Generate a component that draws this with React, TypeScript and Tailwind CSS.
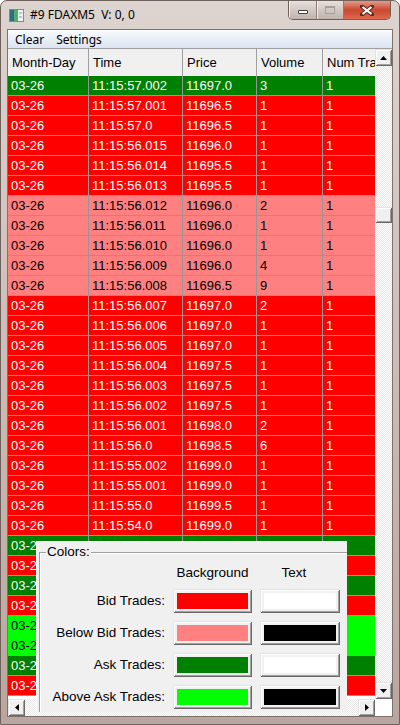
import { Fragment } from "react";

type Kind = "bid" | "below" | "ask" | "above";

const trades: [string, string, string, string, Kind][] = [
  ["11:15:57.002", "11697.0", "3", "1", "ask"],
  ["11:15:57.001", "11696.5", "1", "1", "bid"],
  ["11:15:57.0", "11696.5", "1", "1", "bid"],
  ["11:15:56.015", "11696.0", "1", "1", "bid"],
  ["11:15:56.014", "11695.5", "1", "1", "bid"],
  ["11:15:56.013", "11695.5", "1", "1", "bid"],
  ["11:15:56.012", "11696.0", "2", "1", "below"],
  ["11:15:56.011", "11696.0", "1", "1", "below"],
  ["11:15:56.010", "11696.0", "1", "1", "below"],
  ["11:15:56.009", "11696.0", "4", "1", "below"],
  ["11:15:56.008", "11696.5", "9", "1", "below"],
  ["11:15:56.007", "11697.0", "2", "1", "bid"],
  ["11:15:56.006", "11697.0", "1", "1", "bid"],
  ["11:15:56.005", "11697.0", "1", "1", "bid"],
  ["11:15:56.004", "11697.5", "1", "1", "bid"],
  ["11:15:56.003", "11697.5", "1", "1", "bid"],
  ["11:15:56.002", "11697.5", "1", "1", "bid"],
  ["11:15:56.001", "11698.0", "2", "1", "bid"],
  ["11:15:56.0", "11698.5", "6", "1", "bid"],
  ["11:15:55.002", "11699.0", "1", "1", "bid"],
  ["11:15:55.001", "11699.0", "1", "1", "bid"],
  ["11:15:55.0", "11699.5", "1", "1", "bid"],
  ["11:15:54.0", "11699.0", "1", "1", "bid"],
  ["11:15:48.003", "11699.5", "1", "1", "ask"],
  ["11:15:48.002", "11699.0", "1", "1", "bid"],
  ["11:15:48.001", "11699.5", "1", "1", "ask"],
  ["11:15:48.0", "11699.0", "1", "1", "bid"],
  ["11:15:47.002", "11700.0", "1", "1", "above"],
  ["11:15:47.001", "11700.0", "1", "1", "above"],
  ["11:15:47.0", "11699.5", "1", "1", "ask"],
  ["11:15:46.0", "11699.0", "1", "1", "bid"],
];

const rowColors: Record<Kind, string> = {
  bid: "bg-[#ff0000] text-white",
  below: "bg-[#ff8080] text-black",
  ask: "bg-[#008000] text-white",
  above: "bg-[#00ff00] text-black",
};

const columns = ["Month-Day", "Time", "Price", "Volume", "Num Trades"];

const colorRows = [
  ["Bid Trades:", "#ff0000", "#ffffff"],
  ["Below Bid Trades:", "#ff8080", "#000000"],
  ["Ask Trades:", "#008000", "#ffffff"],
  ["Above Ask Trades:", "#00ff00", "#000000"],
];

const raised =
  "bg-[#f0f0f0] shadow-[inset_1px_1px_0_#e3e3e3,inset_-1px_-1px_0_#696969,inset_2px_2px_0_#ffffff,inset_-2px_-2px_0_#a0a0a0]";

const track =
  "bg-[image:repeating-conic-gradient(#e6e6e6_0%_25%,#ffffff_0%_50%)] bg-[length:2px_2px]";

function Arrow({ dir }: { dir: "up" | "down" | "left" | "right" }) {
  const points = {
    up: "0,4 3.5,0 7,4",
    down: "0,0 7,0 3.5,4",
    left: "4,0 4,7 0,3.5",
    right: "0,0 0,7 4,3.5",
  }[dir];
  const vertical = dir === "up" || dir === "down";
  return (
    <svg width={vertical ? 7 : 4} height={vertical ? 4 : 7}>
      <polygon points={points} fill="#000" />
    </svg>
  );
}

function ScrollButton({ dir }: { dir: "up" | "down" | "left" | "right" }) {
  return (
    <div className={`flex h-[17px] w-[17px] shrink-0 items-center justify-center ${raised}`}>
      <Arrow dir={dir} />
    </div>
  );
}

function ColorButton({ color }: { color: string }) {
  return (
    <div className={`h-[24px] p-[4px] ${raised}`}>
      <div className="h-full w-full" style={{ backgroundColor: color }} />
    </div>
  );
}

function AppIcon() {
  return (
    <svg width="15" height="13" viewBox="0 0 15 13">
      <rect x="0.5" y="0.5" width="14" height="12" fill="#eef2f4" stroke="#7f8a90" />
      <rect x="1" y="1" width="4" height="11" fill="#2b6f86" />
      <rect x="5" y="1" width="4" height="11" fill="#4fae6a" />
      <rect x="10" y="3" width="3" height="2" fill="#b9c6cc" />
      <rect x="10" y="7" width="3" height="2" fill="#b9c6cc" />
    </svg>
  );
}

function CaptionButtons() {
  return (
    <div className="mr-[8px] ml-auto flex h-[19px] overflow-hidden rounded-b-[5px] border border-t-0 border-[#6d605b]">
      <div className="flex w-[28px] items-end justify-center border-r border-[#8a7d78] bg-linear-to-b from-[#e7e0dd] via-[#d2c8c4] to-[#c1b3ad] pb-[5px] shadow-[inset_1px_0_0_#f4efed]">
        <div className="h-[4px] w-[10px] rounded-[1px] border border-[#40403f] bg-white" />
      </div>
      <div className="flex w-[27px] items-center justify-center border-r border-[#8a7d78] bg-linear-to-b from-[#e7e0dd] via-[#d2c8c4] to-[#c1b3ad] shadow-[inset_1px_0_0_#f4efed]">
        <div className="h-[8px] w-[10px] border border-t-2 border-[#a99e9a]" />
      </div>
      <div className="flex w-[46px] items-center justify-center bg-linear-to-b from-[#e49a88] via-[#c9472f] to-[#dd6a4d]">
        <svg width="14" height="11" viewBox="0 0 14 11">
          <path d="M2 1.5 L12 9.5 M12 1.5 L2 9.5" stroke="#5a2a22" strokeWidth="4" strokeLinecap="square" />
          <path d="M2.5 2 L11.5 9 M11.5 2 L2.5 9" stroke="#ffffff" strokeWidth="2.2" />
        </svg>
      </div>
    </div>
  );
}

export default function App() {
  return (
    <div className="flex h-[725px] w-[400px] flex-col overflow-hidden rounded-t-[7px] border border-[#6f625d] bg-linear-to-b from-[#ddd4d0] via-[#cbbdb7] to-[#b9a69e] font-['Liberation_Sans',Arial,sans-serif]">
      {/* caption */}
      <div className="flex h-[28px] shrink-0 items-start">
        <div className="mt-[7px] ml-[8px] flex items-center gap-[6px]">
          <AppIcon />
          <span className="font-['Noto_Sans',sans-serif] text-[12px] leading-[14px] text-black">
            #9 FDAXM5&nbsp; V: 0, 0
          </span>
        </div>
        <CaptionButtons />
      </div>

      {/* client */}
      <div className="mx-[6px] mb-[7px] flex flex-1 flex-col border border-[#7d716c] bg-white">
        <div className="flex h-[18px] shrink-0 items-center gap-[12px] border-t border-white bg-linear-to-b from-[#f7f9fc] to-[#dbe4f1] pl-[7px] font-['Noto_Sans',sans-serif] text-[12px] text-black">
          <span>Clear</span>
          <span>Settings</span>
        </div>

        <div className="relative flex flex-1 flex-col border-t border-[#a0a0a0]">
          <div className="flex flex-1">
            <div className="flex-1 overflow-hidden">
              <div className="grid w-[395px] grid-cols-[81px_94px_74px_66px_80px] text-[13px]">
                {columns.map((c) => (
                  <div
                    key={c}
                    className="flex h-[27px] items-center border-r border-[#a0a0a0] bg-[#f0f0f0] px-[4px] pt-[1px] whitespace-nowrap text-black"
                  >
                    {c}
                  </div>
                ))}
                {trades.map(([time, price, vol, num, kind], i) => {
                  const cells = ["03-26", time, price, vol, num];
                  return cells.map((v, j) => (
                    <div
                      key={`${i}-${j}`}
                      className={`flex h-[20px] items-center border-r border-b border-[#969696] px-[3px] whitespace-nowrap ${rowColors[kind]}`}
                    >
                      {v}
                    </div>
                  ));
                })}
              </div>
            </div>

            {/* vertical scrollbar */}
            <div className={`flex w-[17px] flex-col ${track}`}>
              <ScrollButton dir="up" />
              <div className="h-[141px]" />
              <div className={`h-[16px] w-[17px] ${raised}`} />
              <div className="flex-1" />
              <ScrollButton dir="down" />
            </div>
          </div>

          {/* horizontal scrollbar */}
          <div className="flex h-[17px] shrink-0">
            <div className={`flex flex-1 justify-between ${track}`}>
              <ScrollButton dir="left" />
              <ScrollButton dir="right" />
            </div>
            <div className="w-[17px] bg-white" />
          </div>

          {/* colors dialog */}
          <div className="absolute top-[492px] left-[28px] h-[171px] w-[311px] overflow-hidden border-t border-l border-white bg-[#f0f0f0] pt-[10px] pl-[2px] text-[13.5px] text-black">
            <div className="relative h-full border-t border-l border-[#a0a0a0] shadow-[inset_1px_1px_0_#ffffff]">
              <span className="absolute -top-[9px] left-[6px] bg-[#f0f0f0] px-[1px] leading-[16px]">
                Colors:
              </span>
              <div className="grid grid-cols-[125px_79px_80px] gap-x-[8px] gap-y-[8px] pt-[12px]">
                <div className="h-[16px]" />
                <div className="text-center leading-[16px]">Background</div>
                <div className="pr-[12px] text-center leading-[16px]">Text</div>
                {colorRows.map(([label, bg, fg]) => (
                  <Fragment key={label}>
                    <div className="flex h-[24px] items-center justify-end">{label}</div>
                    <ColorButton color={bg} />
                    <ColorButton color={fg} />
                  </Fragment>
                ))}
              </div>
            </div>
          </div>
        </div>
      </div>
    </div>
  );
}
